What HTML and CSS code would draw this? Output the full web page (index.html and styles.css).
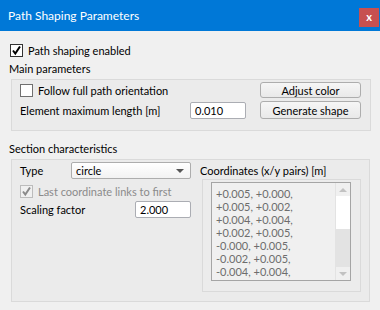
FILE: index.html
```html
<!DOCTYPE html>
<html lang="en">
<head>
    <meta charset="UTF-8">
    <title>Path Shaping Parameters</title>
    <link rel="stylesheet" href="styles.css">
</head>
<body>
    <div class="titlebar">
        <span class="title">Path Shaping Parameters</span>
        <span class="close-button">x</span>
    </div>

    <div class="dialog">
        <label class="check enabled-row">
            <span class="box checked">
                <svg width="11" height="11" viewBox="0 0 11 11"><path d="M2 5.5 L4.3 8.5 L9 1.5" fill="none" stroke="#000" stroke-width="2"/></svg>
            </span>
            Path shaping enabled
        </label>

        <div class="caption">Main parameters</div>
        <div class="group main-group">
            <label class="check follow-row"><span class="box"></span>Follow full path orientation</label>
            <button class="push-button">Adjust color</button>
            <span class="field-label">Element maximum length [m]</span>
            <span class="line-edit">0.010</span>
            <button class="push-button">Generate shape</button>
        </div>

        <div class="caption section-caption">Section characteristics</div>
        <div class="group section-group">
            <div class="section-left">
                <div class="type-row">
                    <span class="type-label">Type</span>
                    <span class="combo">circle<span class="combo-arrow"></span></span>
                </div>
                <label class="check disabled link-row">
                    <span class="box">
                        <svg width="11" height="11" viewBox="0 0 11 11"><path d="M2 5.5 L4.3 8.5 L9 1.5" fill="none" stroke="#8a8a8a" stroke-width="2"/></svg>
                    </span>
                    Last coordinate links to first
                </label>
                <div class="scale-row">
                    <span class="field-label">Scaling factor</span>
                    <span class="line-edit scale-edit">2.000</span>
                </div>
            </div>

            <div class="section-right">
                <div class="coords-label">Coordinates (x/y pairs) [m]</div>
                <div class="coords-frame">
                    <div class="coords-box">
                        <div class="coords-text">
                            <div>+0.005, +0.000,</div>
                            <div>+0.005, +0.002,</div>
                            <div>+0.004, +0.004,</div>
                            <div>+0.002, +0.005,</div>
                            <div>-0.000, +0.005,</div>
                            <div>-0.002, +0.005,</div>
                            <div>-0.004, +0.004,</div>
                            <div>-0.005, +0.002,</div>
                        </div>
                        <div class="scrollbar">
                            <span class="scroll-arrow up"></span>
                            <span class="scroll-thumb"></span>
                            <span class="scroll-track"></span>
                            <span class="scroll-arrow down"></span>
                        </div>
                    </div>
                </div>
            </div>
        </div>
    </div>
</body>
</html>
```

FILE: styles.css
```css
body {
    margin: 0;
    padding: 0;
    width: 380px;
    height: 310px;
    background-color: #f0f0f0;
    font-family: Lato, "Liberation Sans", sans-serif;
    font-size: 11px;
    color: #000;
    overflow: hidden;
}

.titlebar {
    display: flex;
    height: 31px;
    background-color: #0078d7;
    color: white;
}

.title {
    padding-left: 8px;
    line-height: 31px;
    font-size: 12px;
    flex: 1;
}

.close-button {
    width: 20px;
    height: 19px;
    margin: 8px 1px 0 0;
    background-color: #c75050;
    color: white;
    font-weight: bold;
    font-size: 11px;
    line-height: 17px;
    text-align: center;
}

.dialog {
    padding: 11px 9px 0 11px;
}

.check {
    display: flex;
    align-items: center;
    gap: 5px;
    height: 17px;
    white-space: nowrap;
}

.enabled-row {
    margin-left: -1px;
}

.box {
    width: 11px;
    height: 11px;
    flex: none;
    border: 1px solid #707070;
    background-color: white;
    display: flex;
    align-items: center;
    justify-content: center;
}

.box.checked {
    border-color: #333;
}

.caption {
    height: 20px;
    line-height: 20px;
    margin-left: -2px;
}

.section-caption {
    margin-top: 8px;
}

.group {
    border: 1px solid #dadada;
    background-color: #ebebeb;
    box-sizing: border-box;
}

.main-group {
    height: 52px;
    padding: 2px 9px 0 8px;
    display: grid;
    grid-template-columns: 1fr 56px 101px;
    grid-template-rows: 16px 18px;
    column-gap: 14px;
    row-gap: 3px;
    align-items: center;
}

.follow-row {
    grid-column: span 2;
}

.push-button {
    height: 100%;
    padding: 0;
    font-family: inherit;
    font-size: 11px;
    color: #000;
    border: 1px solid #adadad;
    border-radius: 3px;
    background: linear-gradient(#f6f6f6, #e9e9e9);
}

.line-edit {
    height: 17px;
    box-sizing: border-box;
    border: 1px solid #abadb3;
    border-radius: 2px;
    background-color: white;
    padding-left: 4px;
    line-height: 15px;
    align-self: end;
}

.section-group {
    width: 359px;
    height: 143px;
    padding: 2px 9px 0 8px;
    display: flex;
    gap: 9px;
}

.section-left {
    width: 171px;
}

.type-row {
    display: flex;
    align-items: center;
    height: 17px;
}

.type-label {
    width: 51px;
}

.combo {
    position: relative;
    width: 120px;
    height: 17px;
    box-sizing: border-box;
    border: 1px solid #adadad;
    border-radius: 2px;
    background: linear-gradient(#ffffff, #f2f2f2);
    padding-left: 4px;
    line-height: 15px;
}

.combo-arrow {
    position: absolute;
    right: 6px;
    top: 6px;
    border-left: 4px solid transparent;
    border-right: 4px solid transparent;
    border-top: 4px solid #555;
}

.link-row {
    height: 19px;
    padding-top: 3px;
    color: #8a8a8a;
}

.disabled .box {
    border-color: #bcbcbc;
    background-color: #f0f0f0;
}

.scale-row {
    display: flex;
    align-items: center;
    justify-content: space-between;
    height: 17px;
}

.scale-edit {
    width: 56px;
    align-self: auto;
}

.section-right {
    width: 161px;
}

.coords-label {
    height: 17px;
    line-height: 17px;
}

.coords-frame {
    margin-left: 2px;
    width: 159px;
    height: 113px;
    box-sizing: border-box;
    border: 1px solid #dadada;
    background-color: #ececec;
    padding: 2px 0 0 8px;
}

.coords-box {
    display: flex;
    width: 140px;
    height: 99px;
    box-sizing: border-box;
    border: 1px solid #a5a5a5;
    background-color: #f0f0f0;
    overflow: hidden;
}

.coords-text {
    flex: 1;
    padding: 4px 0 0 4px;
    font-size: 11px;
    line-height: 13px;
    color: #6d6d6d;
    white-space: nowrap;
    overflow: hidden;
}

.scrollbar {
    width: 14px;
    flex: none;
    display: flex;
    flex-direction: column;
    border-left: 1px solid #e3e3e3;
}

.scroll-arrow {
    height: 13px;
    position: relative;
    background-color: #f0f0f0;
}

.scroll-arrow::after {
    content: "";
    position: absolute;
    left: 3px;
    top: 5px;
    border-left: 4px solid transparent;
    border-right: 4px solid transparent;
}

.scroll-arrow.up::after {
    border-bottom: 4px solid #c2c2c2;
}

.scroll-arrow.down::after {
    border-top: 4px solid #c2c2c2;
}

.scroll-thumb {
    height: 33px;
    background-color: #ffffff;
}

.scroll-track {
    flex: 1;
    background-color: #e3e3e3;
}
```
